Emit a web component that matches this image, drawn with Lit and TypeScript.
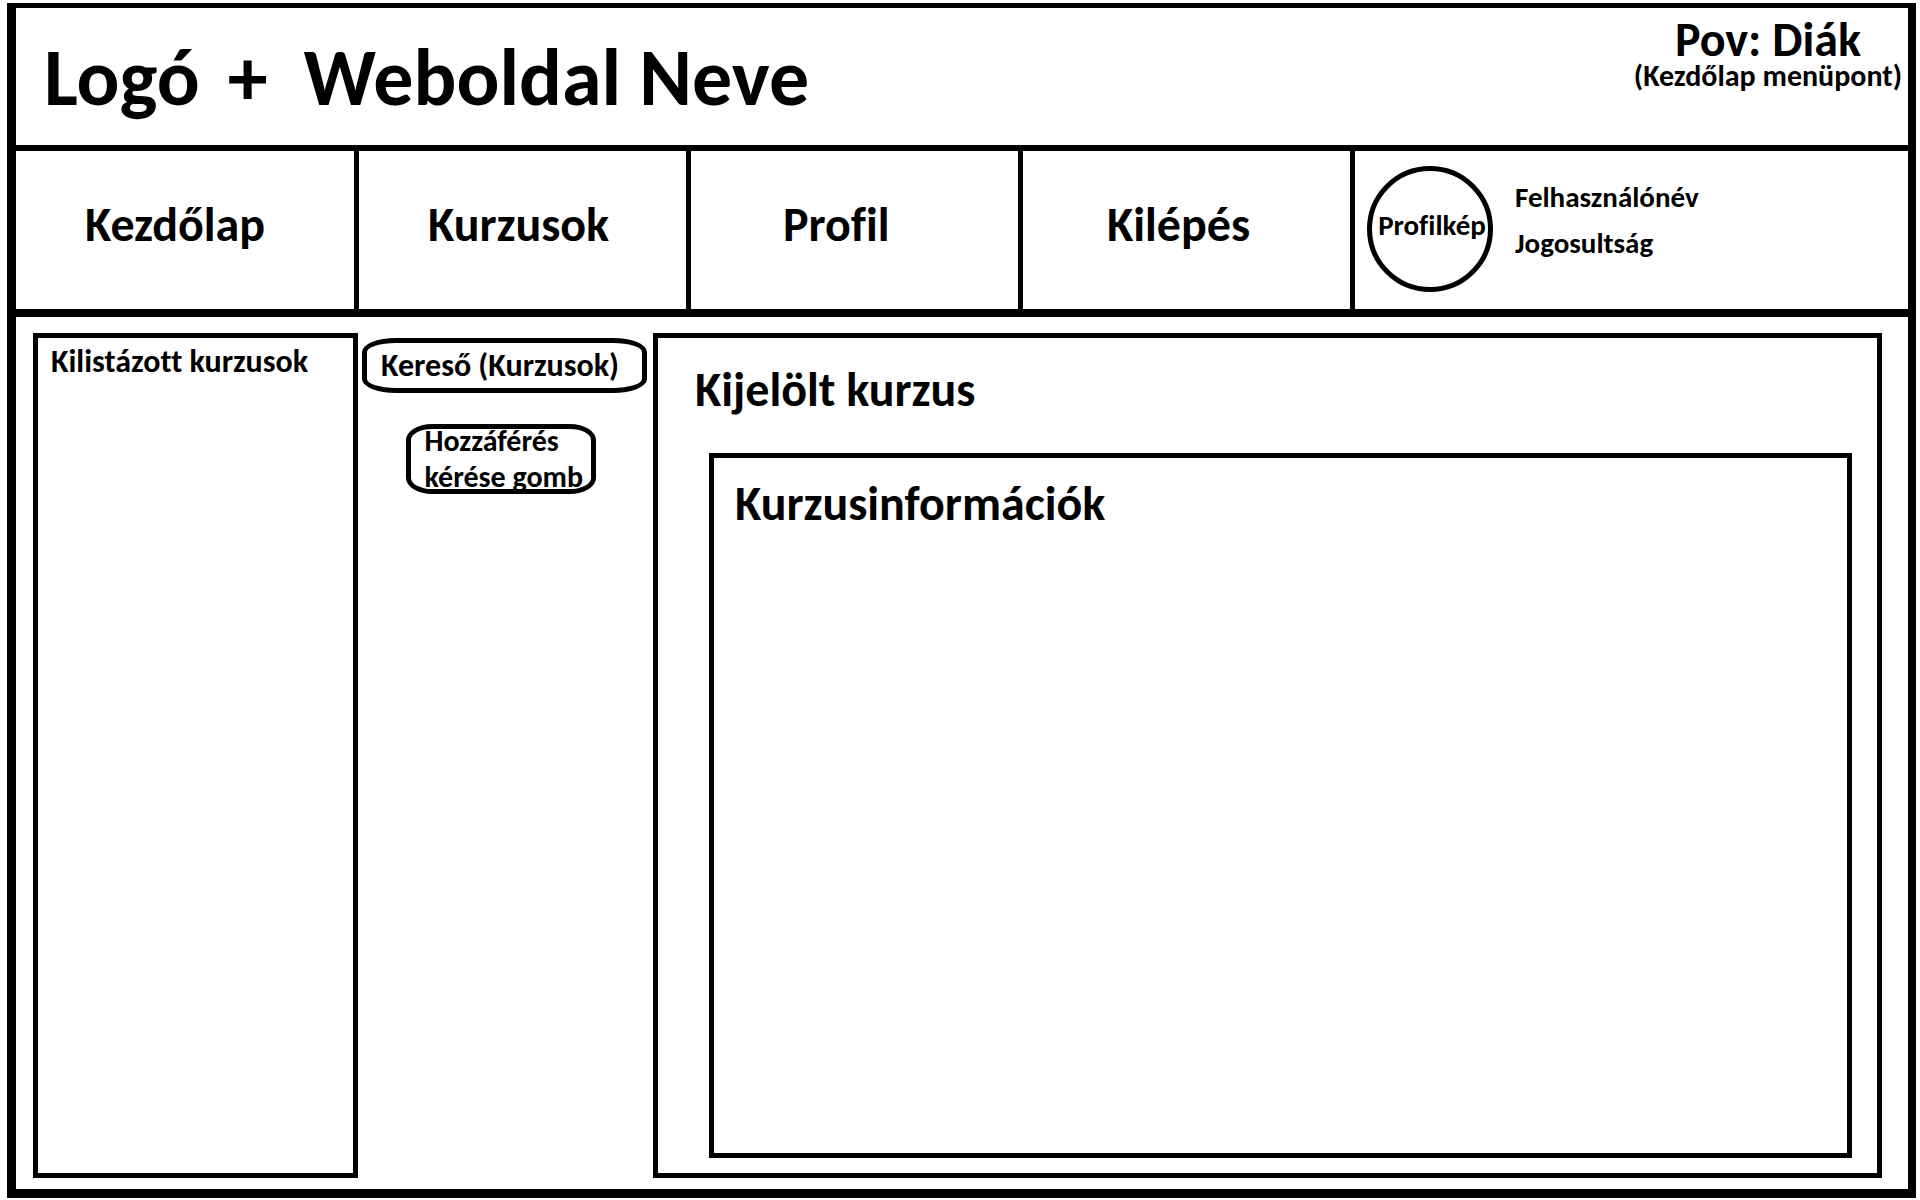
import { LitElement, html, css } from "lit";
import { customElement } from "lit/decorators.js";

@customElement("app-root")
export class AppRoot extends LitElement {
  static styles = css`
    :host {
      --line: 5px;
      --small: 30px;
      --medium: 32px;
      --large: 48px;
      display: block;
      box-sizing: border-box;
      min-height: 100vh;
      padding: 3px 4px 2px 7px;
      background: #fff;
      color: #000;
      font-family: Calibri, Carlito, Lato, sans-serif;
      font-weight: 700;
      font-size: var(--small);
      font-variant-ligatures: none;
      line-height: 36px;
    }
    *,
    *::before,
    *::after {
      box-sizing: border-box;
    }
    h1,
    h2,
    h3,
    p {
      margin: 0;
      font-size: inherit;
      font-weight: inherit;
    }
    .frame {
      display: flex;
      flex-direction: column;
      min-height: calc(100vh - 5px);
      border: solid #000;
      border-width: 5px 8px 9px 9px;
    }
    .header {
      display: flex;
      justify-content: space-between;
      align-items: flex-start;
      min-height: 143px;
      padding: 0 6px 0 28px;
      border-bottom: 6px solid #000;
    }
    .brand {
      display: flex;
      gap: 28px;
      padding-top: 20px;
      font-size: 80px;
      line-height: 100px;
    }
    .name {
      padding-left: 8px;
    }
    .view {
      padding-top: 10px;
      text-align: center;
      line-height: 28px;
    }
    .view-title {
      font-size: var(--large);
      line-height: 44px;
    }
    .bar {
      display: grid;
      grid-template-columns: 343fr 332fr 332fr 332fr 553fr;
      min-height: 166px;
      border-bottom: 8px solid #000;
    }
    .nav {
      display: grid;
      grid-template-columns: subgrid;
      grid-column: 1 / 5;
    }
    .link {
      display: flex;
      align-items: center;
      padding-left: 69px;
      padding-bottom: 10px;
      border-right: var(--line) solid #000;
      color: inherit;
      font-size: var(--large);
      line-height: 60px;
      text-decoration: none;
    }
    .link.mid {
      padding-left: 84px;
    }
    .link.wide {
      padding-left: 92px;
    }
    .user {
      display: flex;
      align-items: flex-start;
      gap: 22px;
      padding: 15px 12px;
      font-size: 29px;
    }
    .avatar {
      display: flex;
      flex: none;
      justify-content: center;
      align-items: center;
      width: 126px;
      height: 126px;
      padding: 0 0 8px 4px;
      border: var(--line) solid #000;
      border-radius: 50%;
    }
    .details {
      display: grid;
      gap: 10px;
      padding-top: 13px;
    }
    .main {
      display: grid;
      grid-template-columns: 325fr 295fr 1229fr;
      flex: 1;
      padding: 16px 26px 11px 17px;
    }
    .panel {
      border: var(--line) solid #000;
    }
    .list {
      padding: 6px 13px;
      font-size: var(--medium);
    }
    .tools {
      display: flex;
      flex-direction: column;
      align-items: center;
      gap: 31px;
      padding: 5px 6px 0 4px;
    }
    .search {
      width: 100%;
      height: 55px;
      margin: 0;
      padding: 0 14px;
      border: var(--line) solid #000;
      border-radius: 34px / 14px;
      background: #fff;
      color: inherit;
      font: inherit;
      font-size: var(--medium);
    }
    .search::placeholder {
      color: #000;
      opacity: 1;
    }
    .request {
      display: flex;
      align-items: center;
      width: 190px;
      height: 70px;
      margin: 0 8px 0 0;
      padding: 0 0 0 14px;
      border: var(--line) solid #000;
      border-radius: 26px / 16px;
      background: #fff;
      color: inherit;
      font: inherit;
      text-align: left;
      white-space: nowrap;
    }
    .course {
      display: flex;
      flex-direction: column;
      padding: 22px 25px 15px 51px;
    }
    .heading {
      font-size: var(--large);
      line-height: 60px;
    }
    .course-title {
      margin-left: -14px;
      padding-bottom: 33px;
    }
    .info {
      flex: 1;
      padding: 16px 21px;
    }
  `;

  render() {
    return html`
      <div class="frame">
        <header class="header">
          <h1 class="brand">
            <span>Logó</span><span>+</span><span class="name">Weboldal Neve</span>
          </h1>
          <div class="view">
            <p class="view-title">Pov: Diák</p>
            <p>(Kezdőlap menüpont)</p>
          </div>
        </header>
        <div class="bar">
          <nav class="nav">
            <a class="link" href="#kezdolap">Kezdőlap</a>
            <a class="link" href="#kurzusok">Kurzusok</a>
            <a class="link wide" href="#profil">Profil</a>
            <a class="link mid" href="#kilepes">Kilépés</a>
          </nav>
          <div class="user">
            <div class="avatar">Profilkép</div>
            <div class="details">
              <p>Felhasználónév</p>
              <p>Jogosultság</p>
            </div>
          </div>
        </div>
        <main class="main">
          <section class="panel list">
            <h2>Kilistázott kurzusok</h2>
          </section>
          <div class="tools">
            <input
              class="search"
              type="text"
              aria-label="Kereső (Kurzusok)"
              placeholder="Kereső (Kurzusok)"
            />
            <button class="request" type="button">
              <span>Hozzáférés<br />kérése gomb</span>
            </button>
          </div>
          <section class="panel course">
            <h2 class="heading course-title">Kijelölt kurzus</h2>
            <section class="panel info">
              <h3 class="heading">Kurzusinformációk</h3>
            </section>
          </section>
        </main>
      </div>
    `;
  }
}
